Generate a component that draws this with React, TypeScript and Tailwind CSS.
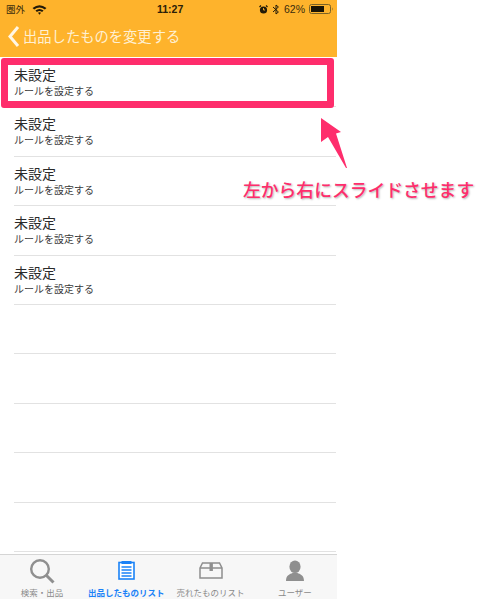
const jp = '"Noto Sans CJK JP", "Noto Sans", sans-serif';

function Row({ title }: { title?: boolean }) {
  return (
    <div className="h-[49.4px] ml-[14px] mr-[1px] border-b border-[#e2e2e2] pt-[8px] box-border">
      {title && (
        <>
          <div className="text-[14px] leading-[17px] text-[#2a2a2a]">未設定</div>
          <div className="text-[10px] leading-[11px] mt-[2px] text-[#3a3a3a]">ルールを設定する</div>
        </>
      )}
    </div>
  );
}

function Tab({ label, active, children }: { label: string; active?: boolean; children: React.ReactNode }) {
  return (
    <div className="flex-1 flex flex-col items-center">
      <div className="h-[31px] flex items-center justify-center">{children}</div>
      <div className={`text-[8.5px] leading-[11px] mt-[1px] whitespace-nowrap ${active ? "text-[#1a82f7] font-bold" : "text-[#8a8a8a]"}`}>{label}</div>
    </div>
  );
}

export default function App() {
  return (
    <div className="relative w-[484px] h-[599px] bg-white overflow-hidden" style={{ fontFamily: jp }}>
      <div className="w-[337px] h-[599px] flex flex-col">
        <header className="h-[57px] bg-[#feb32c] shrink-0">
          <div className="h-[18px] relative flex items-center justify-between pl-[6px] pr-[3px] text-[9.5px] text-[#3a2c0c]">
            <div className="flex items-center gap-[7px]">
              <span>圏外</span>
              <svg width="15" height="11" viewBox="0 0 14 10">
                <path d="M0.5 3.6 Q7 -1.6 13.5 3.6 L12 5 Q7 1.2 2 5 Z M3.2 6 Q7 3 10.8 6 L9.4 7.3 Q7 5.6 4.6 7.3 Z M5.6 8.1 Q7 7 8.4 8.1 L7 9.8 Z" fill="#221a08" />
              </svg>
            </div>
            <span className="absolute left-[157px] top-[2px] text-[10.5px] leading-[14px] font-semibold text-[#2a2008]" style={{ fontFamily: '"Liberation Sans", sans-serif' }}>11:27</span>
            <div className="flex items-center gap-[3px]" style={{ fontFamily: '"Liberation Sans", sans-serif' }}>
              <svg width="9" height="9" viewBox="0 0 9 9"><circle cx="4.5" cy="5" r="3.6" fill="#221a08" /><path d="M4.5 3v2h1.6" stroke="#feb32c" strokeWidth="0.9" fill="none" /><path d="M0.5 2 L2 0.5 M8.5 2 L7 0.5" stroke="#221a08" strokeWidth="1.2" /></svg>
              <svg width="8" height="11" viewBox="0 0 8 11" className="mx-[1px]"><path d="M1 3 L6.4 8 L4 10 V1 L6.4 3 L1 8" stroke="#221a08" strokeWidth="1" fill="none" /></svg>
              <span className="text-[10.5px] leading-[12px] text-[#3a2c0c]">62%</span>
              <svg width="25" height="10" viewBox="0 0 25 10" className="ml-[1px]">
                <rect x="0.5" y="0.5" width="21" height="9" rx="2" fill="none" stroke="#7a6226" />
                <rect x="2" y="2" width="13" height="6" fill="#1a1405" />
                <path d="M23 3.2 Q24.4 5 23 6.8 Z" fill="#7a6226" />
              </svg>
            </div>
          </div>
          <div className="flex items-center h-[39px] pl-[7px] pb-[3px]">
            <svg width="13" height="23" viewBox="0 0 13 23" className="shrink-0">
              <path d="M11 2 L3 11.5 L11 21" stroke="#fff6e4" strokeWidth="3" fill="none" />
            </svg>
            <span className="ml-[3px] text-[14.3px] leading-[20px] text-[#fff0d2]">出品したものを変更する</span>
          </div>
        </header>
        <main className="flex-1 pt-[1px]">
          {[0, 1, 2, 3, 4].map((i) => <Row key={i} title />)}
          {[5, 6, 7, 8, 9].map((i) => <Row key={i} />)}
        </main>
        <footer className="h-[45px] shrink-0 bg-[#f7f7f7] border-t border-[#d5d5d5] flex">
          <Tab label="検索・出品">
            <svg width="26" height="26" viewBox="0 0 26 26"><circle cx="11" cy="11" r="8.8" fill="none" stroke="#8f8f8f" strokeWidth="2.4" /><path d="M17.5 17.5 L24.5 24.5" stroke="#8f8f8f" strokeWidth="3" /></svg>
          </Tab>
          <Tab label="出品したものリスト" active>
            <svg width="17" height="19" viewBox="0 0 17 19"><rect x="1" y="1.5" width="15" height="16.5" fill="#fff" stroke="#1a82f7" strokeWidth="1.6" /><rect x="3.5" y="0" width="10" height="3" fill="#1a82f7" /><path d="M3.5 6h10M3.5 9h10M3.5 12h10M3.5 15h10" stroke="#1a82f7" strokeWidth="1.3" /></svg>
          </Tab>
          <Tab label="売れたものリスト">
            <svg width="24" height="17" viewBox="0 0 24 17"><path d="M1 6 L3.5 1 H20.5 L23 6 V16 H1 Z M1 6 H23" fill="none" stroke="#8f8f8f" strokeWidth="1.5" /><rect x="10.5" y="1" width="3.4" height="8" fill="#8f8f8f" /></svg>
          </Tab>
          <Tab label="ユーザー">
            <svg width="20" height="21" viewBox="0 0 20 21"><ellipse cx="10" cy="6.8" rx="5.6" ry="6.3" fill="#8f8f8f" /><path d="M1 21 C1 15 5 14 7.5 13 H12.5 C15 14 19 15 19 21 Z" fill="#8f8f8f" /></svg>
          </Tab>
        </footer>
      </div>

      <div className="absolute left-[1px] top-[58px] w-[333px] h-[50px] border-[7px] border-[#fe2d6c] rounded-[3px]" />
      <svg className="absolute left-[318px] top-[116px]" width="32" height="54" viewBox="0 0 32 54">
        <path d="M3 2 L23 16 L18 17.5 L29 52 L28 52 L10 21 L3 26 Z" fill="#fe2d6c" />
      </svg>
      <div className="absolute left-[243px] top-[177px] text-[17.8px] leading-[24px] font-medium text-[#fe2d6c] whitespace-nowrap" style={{ textShadow: "1px 1px 2px rgba(0,0,0,0.3)" }}>左から右にスライドさせます</div>
    </div>
  );
}
